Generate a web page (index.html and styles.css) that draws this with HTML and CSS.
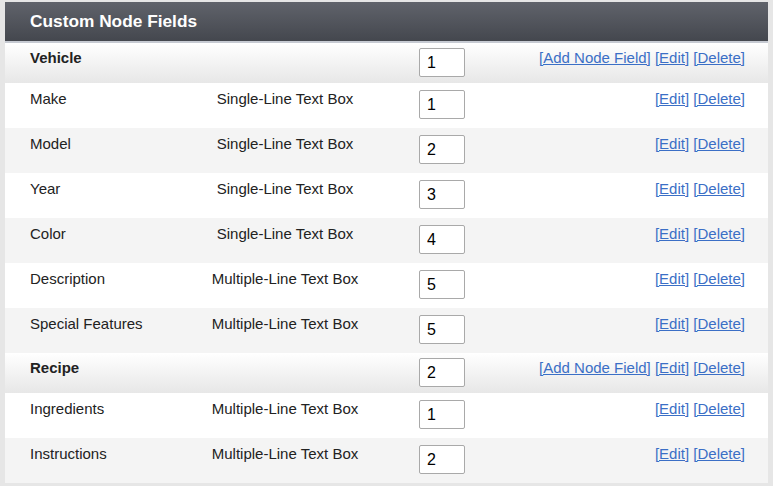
FILE: index.html
```html
<!DOCTYPE html>
<html>
<head>
<meta charset="utf-8">
<title>Custom Node Fields</title>
<link rel="stylesheet" href="styles.css">
</head>
<body>
<div class="panel">
  <div class="panel-head">Custom Node Fields</div>
  <table class="fields">
    <colgroup>
      <col class="c-name"><col class="c-type"><col class="c-order"><col class="c-act">
    </colgroup>
    <tbody>
      <tr class="group">
        <td class="name">Vehicle</td><td></td>
        <td class="order"><input class="ord" type="text" value="1"></td>
        <td class="act"><a href="#">[Add Node Field]</a> <a href="#">[Edit]</a> <a href="#">[Delete]</a></td>
      </tr>
      <tr class="row">
        <td class="name">Make</td><td class="type">Single-Line Text Box</td>
        <td class="order"><input class="ord" type="text" value="1"></td>
        <td class="act"><a href="#">[Edit]</a> <a href="#">[Delete]</a></td>
      </tr>
      <tr class="row alt">
        <td class="name">Model</td><td class="type">Single-Line Text Box</td>
        <td class="order"><input class="ord" type="text" value="2"></td>
        <td class="act"><a href="#">[Edit]</a> <a href="#">[Delete]</a></td>
      </tr>
      <tr class="row">
        <td class="name">Year</td><td class="type">Single-Line Text Box</td>
        <td class="order"><input class="ord" type="text" value="3"></td>
        <td class="act"><a href="#">[Edit]</a> <a href="#">[Delete]</a></td>
      </tr>
      <tr class="row alt">
        <td class="name">Color</td><td class="type">Single-Line Text Box</td>
        <td class="order"><input class="ord" type="text" value="4"></td>
        <td class="act"><a href="#">[Edit]</a> <a href="#">[Delete]</a></td>
      </tr>
      <tr class="row">
        <td class="name">Description</td><td class="type">Multiple-Line Text Box</td>
        <td class="order"><input class="ord" type="text" value="5"></td>
        <td class="act"><a href="#">[Edit]</a> <a href="#">[Delete]</a></td>
      </tr>
      <tr class="row alt">
        <td class="name">Special Features</td><td class="type">Multiple-Line Text Box</td>
        <td class="order"><input class="ord" type="text" value="5"></td>
        <td class="act"><a href="#">[Edit]</a> <a href="#">[Delete]</a></td>
      </tr>
      <tr class="group">
        <td class="name">Recipe</td><td></td>
        <td class="order"><input class="ord" type="text" value="2"></td>
        <td class="act"><a href="#">[Add Node Field]</a> <a href="#">[Edit]</a> <a href="#">[Delete]</a></td>
      </tr>
      <tr class="row">
        <td class="name">Ingredients</td><td class="type">Multiple-Line Text Box</td>
        <td class="order"><input class="ord" type="text" value="1"></td>
        <td class="act"><a href="#">[Edit]</a> <a href="#">[Delete]</a></td>
      </tr>
      <tr class="row alt">
        <td class="name">Instructions</td><td class="type">Multiple-Line Text Box</td>
        <td class="order"><input class="ord" type="text" value="2"></td>
        <td class="act"><a href="#">[Edit]</a> <a href="#">[Delete]</a></td>
      </tr>
    </tbody>
  </table>
</div>
</body>
</html>
```
FILE: styles.css
```css
html, body {
  margin: 0;
  padding: 0;
}
body {
  background: #e6e6e6;
  padding: 2px 5px 0 5px;
  font-family: "Liberation Sans", Arial, Helvetica, sans-serif;
  font-size: 15px;
  color: #222;
}
.panel {
  width: 763px;
  background: #fff;
}
.panel-head {
  height: 39px;
  line-height: 39px;
  padding-left: 25px;
  background: linear-gradient(#60636b, #44474e);
  color: #fff;
  font-weight: bold;
  font-size: 17.3px;
  border-bottom: 2px solid #c6cad2;
}
.fields {
  width: 763px;
  border-collapse: collapse;
  table-layout: fixed;
}
.c-name { width: 195px; }
.c-type { width: 170px; }
.c-order { width: 95px; }
.c-act { width: 303px; }
.fields td {
  vertical-align: top;
  padding: 0;
  line-height: 17px;
}
.fields td.name { padding-left: 25px; }
.fields td.act { padding-right: 23px; text-align: right; }
.fields td.type { text-align: center; }
.fields td.order { text-align: right; }
.row td {
  height: 45px;
  padding-top: 7px;
  box-sizing: border-box;
}
.row.alt { background: #f4f4f4; }
.group {
  background: linear-gradient(#ffffff, #e7e7e7);
}
.group td {
  height: 40px;
  padding-top: 5px;
  box-sizing: border-box;
  font-weight: bold;
}
.group td.act { font-weight: normal; }
.group td.name, .group td.act { padding-top: 6px; }
.ord {
  box-sizing: border-box;
  width: 46px;
  height: 29px;
  margin: 0;
  border: 1px solid #a9a9a9;
  border-radius: 2px;
  padding: 0 7px;
  font-family: "Liberation Sans", Arial, sans-serif;
  font-size: 16px;
  color: #000;
  background: #fff;
  display: inline-block;
  vertical-align: top;
}
.act a {
  color: #3b6fc6;
  text-decoration: underline;
}
```
